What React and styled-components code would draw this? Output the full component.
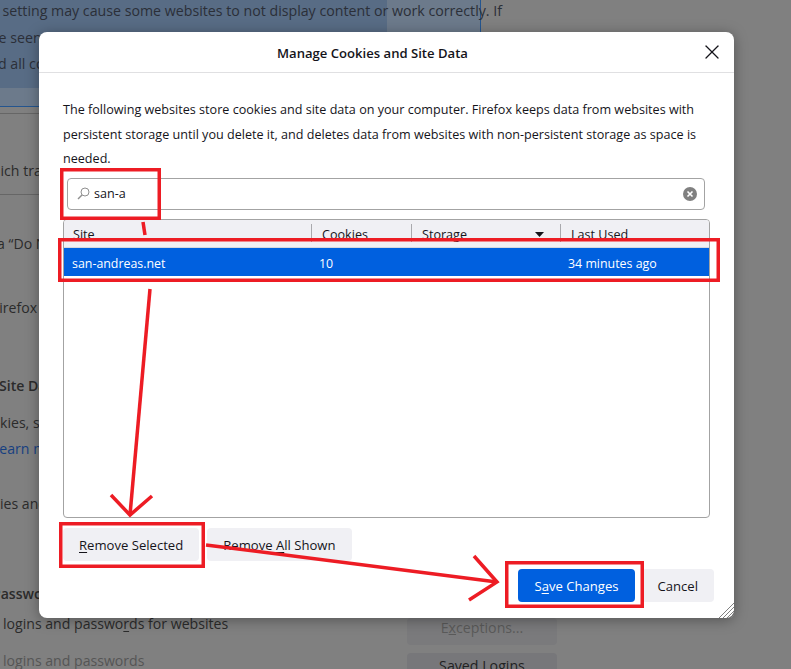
import styled, { createGlobalStyle } from 'styled-components';
import { X } from 'lucide-react';

const GlobalStyle = createGlobalStyle`
  html, body {
    margin: 0;
    padding: 0;
    height: 100%;
    overflow: hidden;
    background: #808080;
    font-family: "Open Sans", "Noto Sans", sans-serif;
  }
`;

const Screen = styled.div`
  position: relative;
  width: 791px;
  height: 669px;
  overflow: hidden;
  background: #808080;
`;

/* the preferences page dimmed behind the dialog */
const Banner = styled.div`
  width: 481px;
  height: 107px;
  box-sizing: border-box;
  border-right: 1px solid #24558f;
  border-bottom: 1px solid #24558f;
  background: #6c7a8b;
`;

const BannerInner = styled.div`
  width: 387px;
  height: 88px;
  display: flow-root;
  background: #586c85;
  color: #2b2f38;
  font-size: 14.2px;
  line-height: 26.5px;
  white-space: nowrap;
`;

const BannerLine = styled.div`
  margin-left: ${(p) => p.$indent}px;
  margin-top: ${(p) => p.$top || 0}px;
`;

const BgLine = styled.div`
  margin-left: ${(p) => p.$indent}px;
  margin-top: ${(p) => p.$top}px;
  font-size: 14.1px;
  line-height: 20px;
  white-space: nowrap;
  color: ${(p) => p.$color || '#2b2b2b'};
  font-weight: ${(p) => (p.$bold ? 600 : 400)};
  & u {
    text-underline-offset: 2px;
  }
`;

const Rule = styled.div`
  height: 1px;
  width: 40px;
  margin-top: ${(p) => p.$top}px;
  background: #666;
`;

const SideButtons = styled.div`
  position: absolute;
  left: 407px;
  top: 618px;
  width: 150px;
  display: flex;
  flex-direction: column;
  gap: 8px;
`;

const BgButton = styled.div`
  height: 27px;
  border-radius: 4px;
  background: ${(p) => (p.$dim ? '#7a7a7c' : '#77777a')};
  color: ${(p) => (p.$dim ? '#5a5a5a' : '#222')};
  font-size: 14.2px;
  line-height: 20px;
  text-align: center;
  padding-top: ${(p) => (p.$dim ? 0 : 3)}px;
`;

const Dialog = styled.div`
  position: absolute;
  left: 39px;
  top: 32px;
  width: 695px;
  height: 586px;
  display: flex;
  flex-direction: column;
  box-sizing: border-box;
  background: #fff;
  border-radius: 8px;
  box-shadow: 0 2px 14px rgba(0, 0, 0, 0.35);
`;

const Header = styled.div`
  position: relative;
  flex: none;
  height: 41px;
  box-sizing: border-box;
  padding: 2px 28px 0 0;
  border-bottom: 1px solid #e0e0e2;
  display: flex;
  align-items: center;
  justify-content: center;
  font-size: 13.1px;
  font-weight: 600;
  color: #15141a;
`;

const CloseButton = styled.div`
  position: absolute;
  right: 10px;
  top: 8px;
  display: flex;
  color: #15141a;
`;

const Body = styled.div`
  flex: 1;
  display: flex;
  flex-direction: column;
  padding: 25px 24px 16px;
  min-height: 0;
`;

const Description = styled.p`
  margin: 0;
  font-size: 12.6px;
  line-height: 24.5px;
  color: #15141a;
`;

const SearchBox = styled.div`
  flex: none;
  margin: 6px 5px 0 4px;
  height: 32px;
  box-sizing: border-box;
  border: 1px solid #a3a3a3;
  border-radius: 4px;
  display: flex;
  align-items: center;
  padding: 0 7px 0 9px;
  gap: 4px;
  font-size: 12.6px;
  color: #15141a;
`;

const SearchValue = styled.span`
  flex: 1;
`;

const Tree = styled.div`
  flex: none;
  margin-top: 9px;
  height: 299px;
  box-sizing: border-box;
  border: 1px solid #a3a3a3;
  border-radius: 4px;
  overflow: hidden;
`;

const Columns = styled.div`
  display: grid;
  grid-template-columns: 247px 100px 149px 1fr;
  align-items: center;
`;

const TreeHead = styled(Columns)`
  height: 28px;
  background: #f0f0f4;
  border-bottom: 1px solid #d8d8dc;
  box-sizing: border-box;
  font-size: 12.6px;
  color: #15141a;
`;

const HeadCell = styled.div`
  height: 18px;
  box-sizing: border-box;
  display: flex;
  justify-content: space-between;
  align-items: center;
  padding: 3px 16px 0 ${(p) => (p.$first ? 9 : 10)}px;
  border-left: ${(p) => (p.$first ? 'none' : '1px solid #a9a9ad')};
`;

const SortArrow = styled.svg`
  width: 9px;
  height: 5px;
  fill: #15141a;
`;

const SelectedRow = styled(Columns)`
  height: 28px;
  box-sizing: border-box;
  padding-top: 3px;
  background: #0060df;
  color: #fff;
  font-size: 12.4px;
`;

const RowCell = styled.div`
  padding-left: ${(p) => p.$pad}px;
`;

const Actions = styled.div`
  flex: none;
  display: flex;
  gap: 8px;
  margin-top: 10px;
`;

const Button = styled.div`
  height: 33px;
  box-sizing: border-box;
  padding: 1px 16px 0;
  display: flex;
  align-items: center;
  justify-content: center;
  border-radius: 4px;
  font-size: 13.1px;
  background: ${(p) => (p.$primary ? '#0060df' : '#f0f0f4')};
  color: ${(p) => (p.$primary ? '#fff' : '#15141a')};
  & u {
    text-underline-offset: 2px;
  }
`;

const Footer = styled.div`
  flex: none;
  display: flex;
  justify-content: flex-end;
  gap: 7px;
  margin: 8px -4px 0 0;
`;

const Gripper = styled.svg`
  position: absolute;
  right: 0;
  bottom: 0;
  width: 16px;
  height: 16px;
  stroke: #808080;
  stroke-width: 1;
`;

const Marks = styled.svg`
  position: absolute;
  left: 0;
  top: 0;
  width: 791px;
  height: 669px;
  pointer-events: none;
  fill: none;
  stroke: #ed1c24;
  stroke-width: 3.5;
`;

export default function App() {
  return (
    <Screen>
      <GlobalStyle />

      <Banner>
        <BannerInner>
          <BannerLine $indent={-28} $top={-2}>This setting may cause some websites to not display content or work correctly. If</BannerLine>
          <BannerLine $indent={-36}>you've seen</BannerLine>
          <BannerLine $indent={-22}>load all content</BannerLine>
        </BannerInner>
      </Banner>
      <Rule $top={6} />
      <BgLine $indent={-19} $top={47}>which tra</BgLine>
      <Rule $top={13} />
      <BgLine $indent={-3} $top={39}>a “Do Not</BgLine>
      <BgLine $indent={-8} $top={44}>Firefox</BgLine>
      <BgLine $indent={-1} $top={58} $bold>Site Data</BgLine>
      <BgLine $indent={0} $top={17}>kies, site</BgLine>
      <BgLine $indent={-8} $top={6} $color="#163f80">Learn more</BgLine>
      <BgLine $indent={0} $top={35}>ies and</BgLine>
      <BgLine $indent={-8} $top={70} $bold>Passwords</BgLine>
      <BgLine $indent={3} $top={10}>logins and passwo<u>r</u>ds for websites</BgLine>
      <BgLine $indent={3} $top={17} $color="#555">logins and passwords</BgLine>

      <SideButtons>
        <BgButton $dim>E<u>x</u>ceptions...</BgButton>
        <BgButton>Saved Logins</BgButton>
      </SideButtons>

      <Dialog>
        <Header>
          Manage Cookies and Site Data
          <CloseButton><X size={24} strokeWidth={1.3} /></CloseButton>
        </Header>
        <Body>
          <Description>
            The following websites store cookies and site data on your computer. Firefox keeps data from websites with
            persistent storage until you delete it, and deletes data from websites with non-persistent storage as space is
            needed.
          </Description>
          <SearchBox>
            <svg width="13" height="13" viewBox="0 0 13 13" fill="none" stroke="#8f8f8f" strokeWidth="1">
              <circle cx="8" cy="5" r="4" />
              <path d="M5 8 L1 12" strokeWidth="1.4" />
            </svg>
            <SearchValue>san-a</SearchValue>
            <svg width="14" height="14" viewBox="0 0 14 14">
              <circle cx="7" cy="7" r="7" fill="#808080" />
              <path d="M4.5 4.5 L9.5 9.5 M9.5 4.5 L4.5 9.5" stroke="#fff" strokeWidth="1.6" />
            </svg>
          </SearchBox>
          <Tree>
            <TreeHead>
              <HeadCell $first>Site</HeadCell>
              <HeadCell>Cookies</HeadCell>
              <HeadCell>
                Storage
                <SortArrow viewBox="0 0 9 5"><path d="M0 0 H9 L4.5 5 Z" /></SortArrow>
              </HeadCell>
              <HeadCell>Last Used</HeadCell>
            </TreeHead>
            <SelectedRow>
              <RowCell $pad={8}>san-andreas.net</RowCell>
              <RowCell $pad={8}>10</RowCell>
              <RowCell $pad={0} />
              <RowCell $pad={8}>34 minutes ago</RowCell>
            </SelectedRow>
          </Tree>
          <Actions>
            <Button><span><u>R</u>emove Selected</span></Button>
            <Button><span>Remove <u>A</u>ll Shown</span></Button>
          </Actions>
          <Footer>
            <Button $primary><span>S<u>a</u>ve Changes</span></Button>
            <Button>Cancel</Button>
          </Footer>
        </Body>
        <Gripper viewBox="0 0 16 16">
          <path d="M16 1 L1 16 M16 5 L5 16 M16 9 L9 16 M16 13 L13 16" />
        </Gripper>
      </Dialog>

      <Marks viewBox="0 0 791 669">
        <rect x="61.75" y="169.75" width="97.5" height="48.5" />
        <rect x="59.75" y="239.75" width="658.5" height="40.5" />
        <rect x="60.75" y="523.75" width="142.5" height="42.5" />
        <rect x="506.75" y="562.75" width="135.5" height="43.5" />
        <path d="M143 222 L145 235" />
        <path d="M150 289 L130 515" />
        <path d="M111 495 L130 515 L152 496" />
        <path d="M206 545 L497 582" />
        <path d="M474 556 L497 582 L469 600" />
      </Marks>
    </Screen>
  );
}
